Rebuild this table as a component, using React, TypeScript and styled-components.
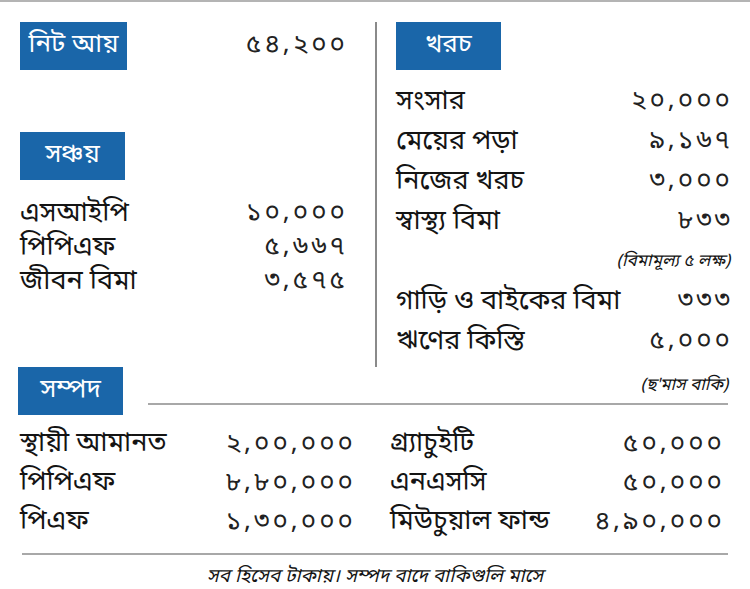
import React from 'react'
import styled, { createGlobalStyle } from 'styled-components'

const GlobalStyle = createGlobalStyle`
  html, body {
    margin: 0;
    padding: 0;
    background: #ffffff;
  }
  body {
    font-family: "Noto Sans Bengali", "Noto Serif Bengali", "Lohit Bengali", "FreeSans", "Noto Sans", sans-serif;
    color: #141414;
  }
`

const income = { label: 'নিট আয়', value: '৫৪,২০০' }

const savings = [
  { label: 'এসআইপি', value: '১০,০০০' },
  { label: 'পিপিএফ', value: '৫,৬৬৭' },
  { label: 'জীবন বিমা', value: '৩,৫৭৫' },
]

const expenses = [
  { label: 'সংসার', value: '২০,০০০' },
  { label: 'মেয়ের পড়া', value: '৯,১৬৭' },
  { label: 'নিজের খরচ', value: '৩,০০০' },
  { label: 'স্বাস্থ্য বিমা', value: '৮৩৩', note: '(বিমামূল্য ৫ লক্ষ)' },
  { label: 'গাড়ি ও বাইকের বিমা', value: '৩৩৩' },
  { label: 'ঋণের কিস্তি', value: '৫,০০০' },
]

const assetsLeft = [
  { label: 'স্থায়ী আমানত', value: '২,০০,০০০' },
  { label: 'পিপিএফ', value: '৮,৮০,০০০' },
  { label: 'পিএফ', value: '১,৩০,০০০' },
]

const assetsRight = [
  { label: 'গ্র্যাচুইটি', value: '৫০,০০০' },
  { label: 'এনএসসি', value: '৫০,০০০' },
  { label: 'মিউচুয়াল ফান্ড', value: '৪,৯০,০০০' },
]

export default function App() {
  return (
    <Page>
      <GlobalStyle />
      <TopRule />
      <Columns>
        <LeftCol>
          <HeadRow>
            <Badge $width={107}>{income.label}</Badge>
            <Value>{income.value}</Value>
          </HeadRow>
          <Badge $width={105} $top={62}>সঞ্চয়</Badge>
          <List $top={17}>
            {savings.map((s) => (
              <Row key={s.label} $h={34}>
                <Label>{s.label}</Label>
                <Value>{s.value}</Value>
              </Row>
            ))}
          </List>
        </LeftCol>
        <RightCol>
          <Badge $width={105}>খরচ</Badge>
          <List $top={12}>
            {expenses.map((e) => (
              <React.Fragment key={e.label}>
                <Row $h={40}>
                  <Label>{e.label}</Label>
                  <Value>{e.value}</Value>
                </Row>
                {e.note && <Note $lh={40}>{e.note}</Note>}
              </React.Fragment>
            ))}
          </List>
        </RightCol>
      </Columns>
      <AssetHead>
        <Badge $width={105}>সম্পদ</Badge>
        <AssetHeadSide>
          <Note $lh={30}>(ছ'মাস বাকি)</Note>
          <Rule />
        </AssetHeadSide>
      </AssetHead>
      <Assets>
        {[assetsLeft, assetsRight].map((col, i) => (
          <AssetCol key={i}>
            {col.map((a) => (
              <Row key={a.label} $h={39}>
                <Label>{a.label}</Label>
                <Value>{a.value}</Value>
              </Row>
            ))}
          </AssetCol>
        ))}
      </Assets>
      <BottomRule />
      <Footnote>সব হিসেব টাকায়। সম্পদ বাদে বাকিগুলি মাসে</Footnote>
    </Page>
  )
}

const Page = styled.div`
  width: 750px;
  height: 589px;
  overflow: hidden;
  background: #fff;
`

const TopRule = styled.div`
  height: 2px;
  background: #b4b4b4;
`

const Columns = styled.div`
  display: grid;
  grid-template-columns: 375px 375px;
  padding-top: 20px;
`

const LeftCol = styled.div`
  padding: 0 30px 0 20px;
`

const RightCol = styled.div`
  border-left: 2px solid #8a8a8a;
  padding: 0 20px 0 19px;
  height: 345px;
`

const HeadRow = styled.div`
  display: flex;
  align-items: center;
  justify-content: space-between;
`

const Badge = styled.div<{ $width: number; $top?: number }>`
  width: ${(p) => p.$width}px;
  height: 48px;
  margin-top: ${(p) => p.$top ?? 0}px;
  background: #1a66a9;
  color: #fff;
  font-size: 26px;
  line-height: 48px;
  text-align: center;
  flex-shrink: 0;
`

const List = styled.div<{ $top?: number }>`
  display: flex;
  flex-direction: column;
  margin-top: ${(p) => p.$top ?? 14}px;
`

const Row = styled.div<{ $h: number }>`
  display: flex;
  justify-content: space-between;
  align-items: center;
  height: ${(p) => p.$h}px;
`

const Label = styled.span`
  font-size: 27px;
  line-height: 1;
  white-space: nowrap;
`

const Value = styled.span`
  font-size: 26px;
  line-height: 1;
  letter-spacing: 3px;
  margin-right: -3px;
  color: #222;
  white-space: nowrap;
`

const Note = styled.div<{ $lh: number }>`
  font-size: 17px;
  font-style: italic;
  text-align: right;
  line-height: ${(p) => p.$lh}px;
`

const AssetHead = styled.div`
  display: flex;
  align-items: flex-end;
  padding: 0 22px 0 18px;
`

const AssetHeadSide = styled.div`
  flex: 1;
  display: flex;
  flex-direction: column;
  margin-left: 25px;
  margin-bottom: 10px;
`

const Rule = styled.div`
  height: 2px;
  background: #a8a8a8;
  margin-top: 2px;
`

const Assets = styled.div`
  display: grid;
  grid-template-columns: 333px 332px;
  column-gap: 37px;
  padding: 10px 0 0 20px;
`

const AssetCol = styled.div`
  display: flex;
  flex-direction: column;
`

const BottomRule = styled.div`
  height: 2px;
  background: #a8a8a8;
  margin: 11px 22px 0 22px;
`

const Footnote = styled.div`
  font-size: 19px;
  font-style: italic;
  text-align: center;
  line-height: 20px;
  margin-top: 13px;
`
